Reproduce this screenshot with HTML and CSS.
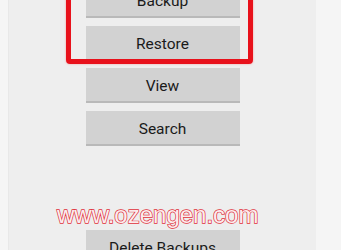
FILE: index.html
```html
<!DOCTYPE html>
<html>
<head>
<meta charset="utf-8">
<link rel="stylesheet" href="styles.css">
</head>
<body>
<div class="panel">
  <div class="buttons">
    <div class="btn">Backup</div>
    <div class="btn">Restore</div>
    <div class="btn">View</div>
    <div class="btn">Search</div>
    <div class="btn btn-delete">Delete Backups</div>
  </div>
  <div class="highlight"></div>
  <div class="watermark">www.ozengen.com</div>
</div>
</body>
</html>
```
FILE: styles.css
```css
html, body {
  margin: 0;
  padding: 0;
}
body {
  width: 341px;
  height: 250px;
  overflow: hidden;
  background: #f5f5f5;
  font-family: Roboto, "Liberation Sans", sans-serif;
}
.panel {
  position: relative;
  display: flow-root;
  margin-left: 8px;
  width: 308px;
  height: 250px;
  overflow: hidden;
  background: #eeeeee;
  border-left: 1px solid #e8e8e8;
  box-sizing: border-box;
}
.buttons {
  display: flex;
  flex-direction: column;
  align-items: center;
  gap: 7.5px;
  margin-top: -17px;
}
.btn {
  width: 154px;
  height: 35px;
  flex: none;
  box-sizing: border-box;
  background: #d2d2d2;
  border-bottom: 2px solid #b9b9b9;
  color: #1a1a1a;
  font-size: 15.5px;
  display: flex;
  align-items: center;
  justify-content: center;
  padding-top: 3px;
}
.btn-delete {
  margin-top: 77px;
}
.highlight {
  position: absolute;
  left: 57px;
  top: -30px;
  width: 187px;
  height: 94px;
  box-sizing: border-box;
  border: 5px solid #e8111b;
  border-radius: 4px;
  box-shadow: 0 0 2px rgba(255, 60, 60, 0.5);
}
.watermark {
  position: absolute;
  left: 48px;
  top: 201px;
  font-family: "Liberation Sans", Arial, sans-serif;
  font-size: 24px;
  line-height: 28px;
  color: #fbecee;
  -webkit-text-stroke: 1.4px #e0303a;
  paint-order: stroke fill;
  white-space: nowrap;
}
```
